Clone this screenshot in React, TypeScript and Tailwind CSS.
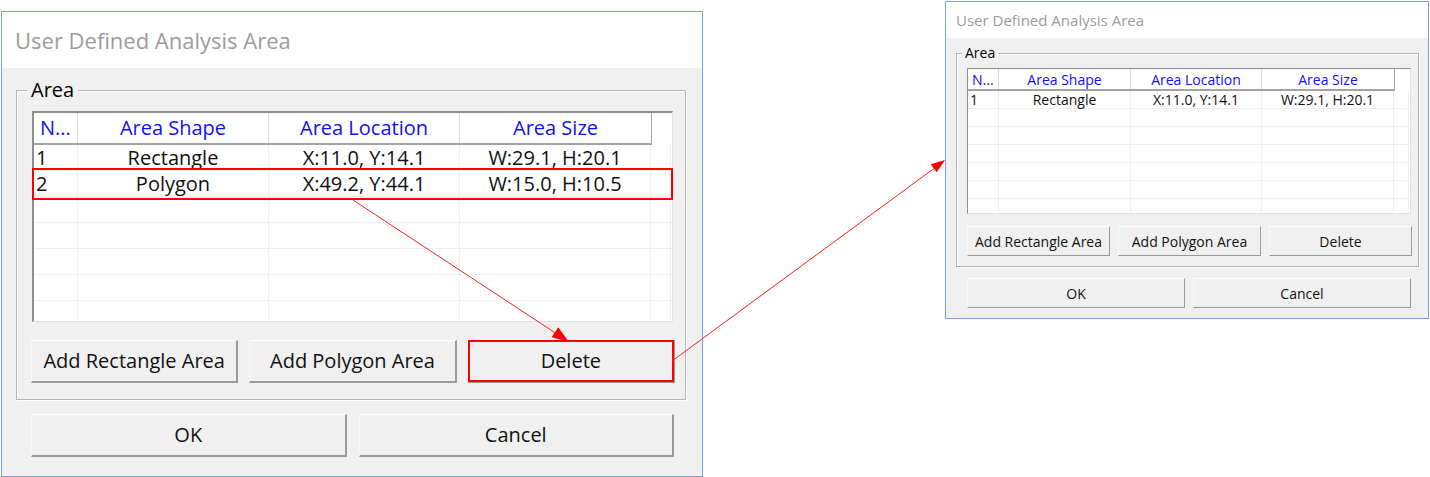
import React from "react";

type Size = "big" | "small";

const sizes = {
  big: {
    dialog: "mt-[11px] ml-[1px] w-[702px] h-[466px]",
    title: "h-[56px] pl-[13px] text-[22px]",
    body: "pl-[14px] pr-[17px]",
    fieldset: "mt-[10px]",
    legend: "ml-[10px] px-[4px] text-[20px] leading-[24px]",
    inner: "pl-[15px] pr-[12px] pt-[9px] pb-[16px]",
    list: "h-[211px] border-t-2 border-l-2",
    header: "h-[32px]",
    headFirst: "pl-[6px]",
    cols: ["w-[44px]", "w-[191px]", "w-[191px]", "w-[191px]"],
    rest: "w-[20px]",
    row: "h-[26px]",
    cellFirst: "pl-[2px]",
    text: "text-[20px]",
    btnRow: "mt-[18px] gap-[11px] -ml-px -mr-[2px]",
    btn: "h-[43px] border-b-2 border-r-2",
    footer: "mt-[14px] pl-[15px] pr-[11px] gap-[12px]",
    mark: "top-[57px] h-[32px]",
  },
  small: {
    dialog: "mt-[1px] ml-[242px] w-[484px] h-[318px]",
    title: "h-[36px] pl-[10px] text-[15px]",
    body: "pl-[10px] pr-[10px]",
    fieldset: "mt-[7px]",
    legend: "ml-[5px] px-[3px] text-[14px] leading-[16px]",
    inner: "pl-[10px] pr-[7px] pt-[7px] pb-[10px]",
    list: "h-[146px] border-t border-l",
    header: "h-[22px]",
    headFirst: "pl-[4px]",
    cols: ["w-[31px]", "w-[132px]", "w-[131px]", "w-[132px]"],
    rest: "w-[15px]",
    row: "h-[18px]",
    cellFirst: "pl-[2px]",
    text: "text-[14px]",
    btnRow: "mt-[12px] gap-[8px] -mr-px",
    btn: "h-[30px] border-b border-r",
    footer: "mt-[11px] pl-[11px] pr-[7px] gap-[8px]",
    mark: "top-[0px] h-[0px]",
  },
};

const headers = ["N...", "Area Shape", "Area Location", "Area Size"];

const rows = [
  ["1", "Rectangle", "X:11.0, Y:14.1", "W:29.1, H:20.1"],
  ["2", "Polygon", "X:49.2, Y:44.1", "W:15.0, H:10.5"],
];

const Button = ({ label, size, marked }: { label: string; size: Size; marked?: boolean }) => {
  const s = sizes[size];
  return (
    <div
      className={`relative flex-1 flex items-center justify-center bg-[#f0f0f0] text-[#111] border-t border-l border-t-white border-l-[#f8f8f8] border-r-[#9a9a9a] border-b-[#9a9a9a] ${s.btn} ${s.text}`}
    >
      {label}
      {marked && <div className="absolute -inset-px border-2 border-[#ff0000]" />}
    </div>
  );
};

const Dialog = ({ size, count }: { size: Size; count: number }) => {
  const s = sizes[size];
  const filled = [...rows.slice(0, count), ...Array(7 - count).fill(["", "", "", ""])];
  return (
    <div className={`flex flex-col shrink-0 border border-[#7b9fd8] bg-[#f0f0f0] ${s.dialog}`}>
      <div className={`flex items-center bg-white text-[#9c9c9c] ${s.title}`}>User Defined Analysis Area</div>
      <div className={`flex flex-col ${s.body}`}>
        <fieldset
          className={`border border-[#b5b5b5] shadow-[inset_1px_1px_0_#ffffff,1px_1px_0_#ffffff] ${s.fieldset}`}
        >
          <legend className={`bg-[#f0f0f0] text-black ${s.legend}`}>Area</legend>
          <div className={`flex flex-col ${s.inner}`}>
            <div className="relative">
              <div
                className={`flex flex-col overflow-hidden bg-white border-[#8e8e8e] border-r border-b border-r-[#e2e2e2] border-b-[#e2e2e2] ${s.list} ${s.text}`}
              >
                <div className={`flex shrink-0 ${s.header}`}>
                  <div className="flex border-b-2 border-r border-[#a3a3a3]">
                    {headers.map((h, i) => (
                      <div
                        key={h}
                        className={`flex items-center text-[#1010f8] ${s.cols[i]} ${
                          i === 0 ? s.headFirst : "justify-center"
                        } ${i < 3 ? "border-r border-[#dcdcdc]" : ""}`}
                      >
                        {h}
                      </div>
                    ))}
                  </div>
                  <div className={`${s.rest}`} />
                </div>
                {filled.map((r, ri) => (
                  <div key={ri} className={`flex shrink-0 border-b border-[#efefef] ${s.row}`}>
                    {r.map((c: string, ci: number) => (
                      <div
                        key={ci}
                        className={`flex items-center text-[#111] border-r border-[#efefef] ${s.cols[ci]} ${
                          ci === 0 ? s.cellFirst : "justify-center"
                        }`}
                      >
                        {c}
                      </div>
                    ))}
                    <div className={`border-r border-[#efefef] ${s.rest}`} />
                  </div>
                ))}
              </div>
              {size === "big" && (
                <div className={`absolute left-0 right-0 border-2 border-[#ff0000] ${s.mark}`} />
              )}
            </div>
            <div className={`flex ${s.btnRow}`}>
              <Button label="Add Rectangle Area" size={size} />
              <Button label="Add Polygon Area" size={size} />
              <Button label="Delete" size={size} marked={size === "big"} />
            </div>
          </div>
        </fieldset>
        <div className={`flex ${s.footer}`}>
          <Button label="OK" size={size} />
          <Button label="Cancel" size={size} />
        </div>
      </div>
    </div>
  );
};

export default function App() {
  return (
    <div className="relative flex items-start w-[1430px] h-[477px] overflow-hidden bg-white font-['Open_Sans',sans-serif]">
      <Dialog size="big" count={2} />
      <Dialog size="small" count={1} />
      <svg className="absolute inset-0 pointer-events-none" width="1430" height="477" viewBox="0 0 1430 477">
        <line x1="353" y1="200" x2="560" y2="336" stroke="#ff2020" strokeWidth="1" />
        <polygon points="569,342 551.6,337.2 558.2,327.2" fill="#ff0000" />
        <line x1="672" y1="361" x2="936" y2="167" stroke="#ff2020" strokeWidth="1" />
        <polygon points="945,160 936.7,172.3 930.7,164.3" fill="#ff0000" />
      </svg>
    </div>
  );
}
